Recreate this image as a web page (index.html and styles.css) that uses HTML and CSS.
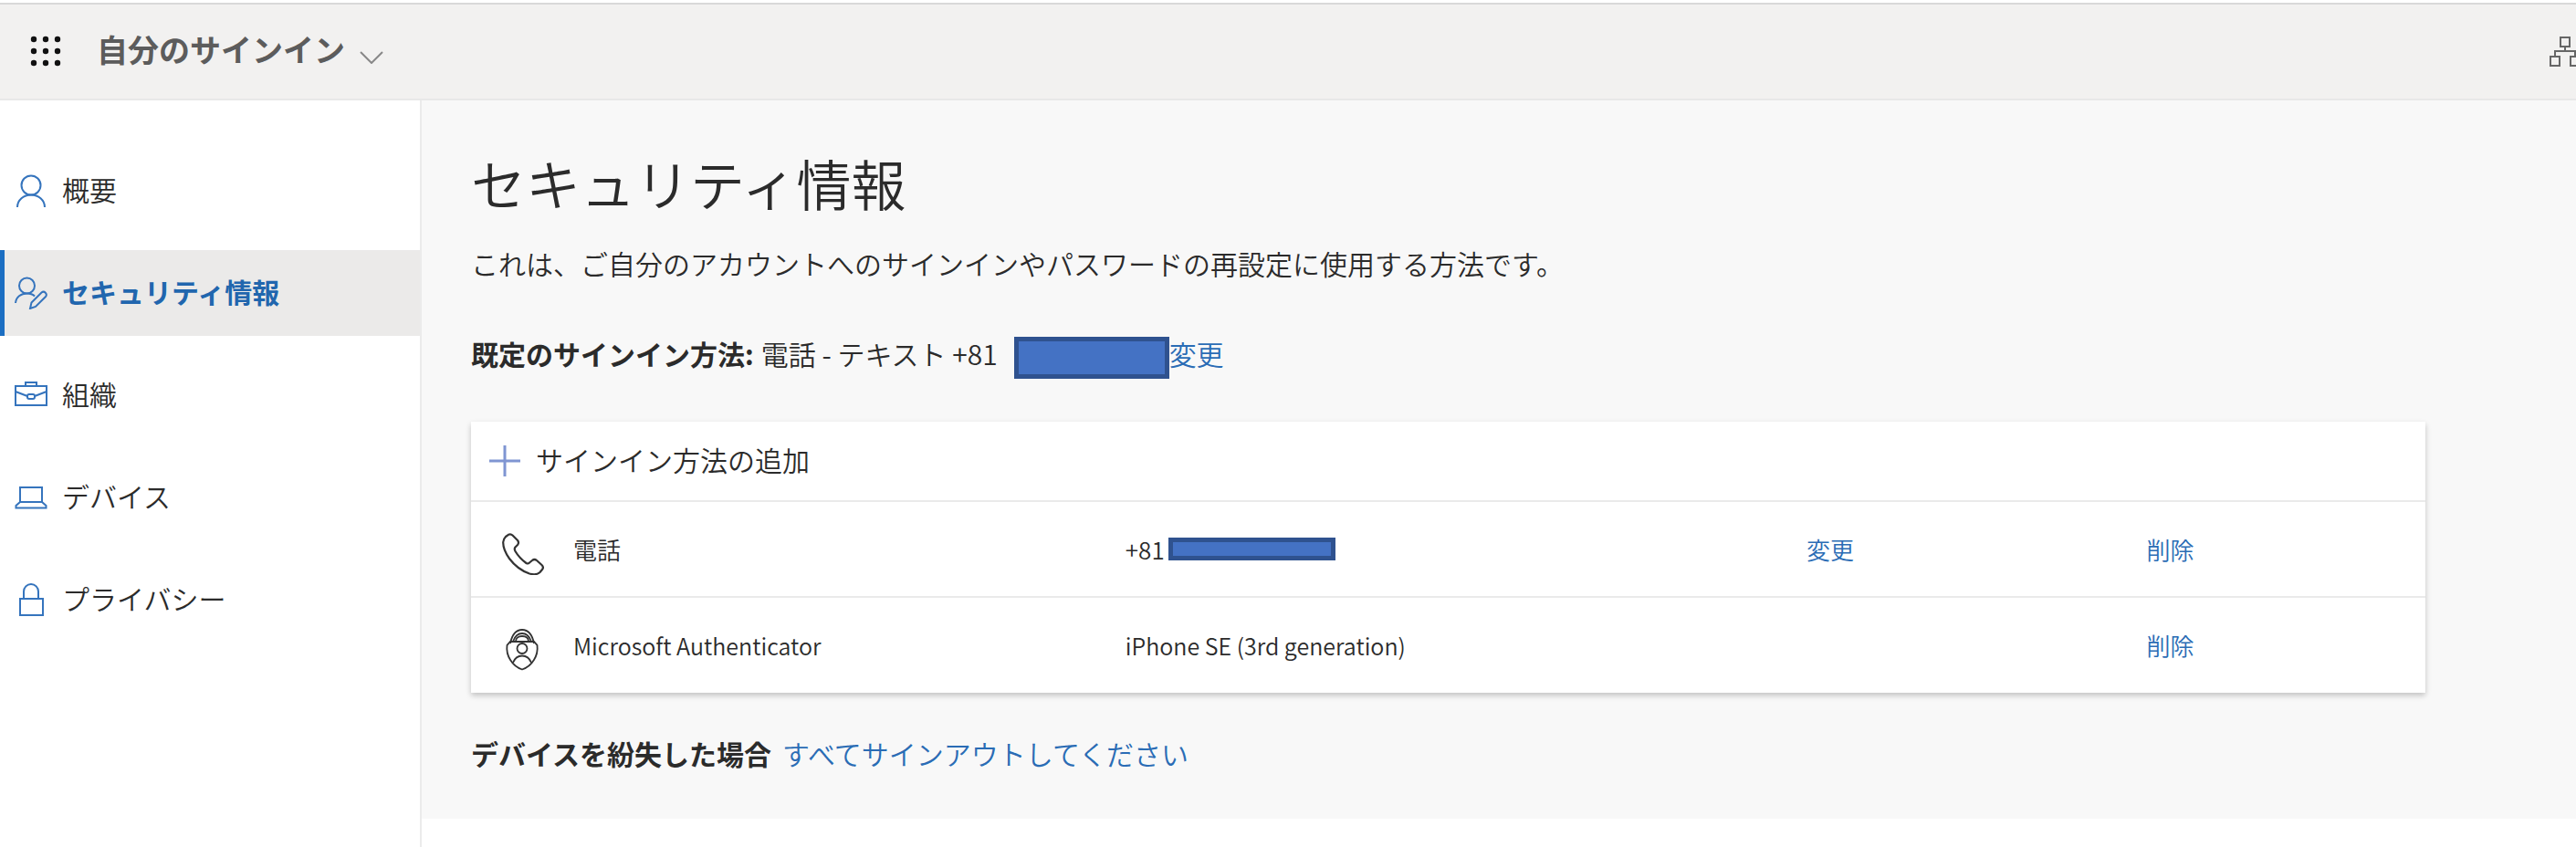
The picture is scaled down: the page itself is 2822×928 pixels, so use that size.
FILE: index.html
```html
<!DOCTYPE html>
<html lang="ja">
<head>
  <meta charset="UTF-8" />
  <title>自分のサインイン</title>
  <link rel="stylesheet" href="styles.css">
</head>
<body>
  <header class="header">
    <button class="icon-button" aria-label="アプリ">
      <svg width="34" height="34" viewBox="0 0 34 34" fill="#111">
        <circle cx="4" cy="4" r="3.2" /><circle cx="17" cy="4" r="3.2" /><circle cx="30" cy="4" r="3.2" />
        <circle cx="4" cy="17" r="3.2" /><circle cx="17" cy="17" r="3.2" /><circle cx="30" cy="17" r="3.2" />
        <circle cx="4" cy="30" r="3.2" /><circle cx="17" cy="30" r="3.2" /><circle cx="30" cy="30" r="3.2" />
      </svg>
    </button>
    <button class="title-button">
      自分のサインイン
      <svg class="chevron" width="26" height="14" viewBox="0 0 26 14" fill="none" stroke="#888" stroke-width="2">
        <path d="M1 1 L13 13 L25 1" />
      </svg>
    </button>
    <button class="icon-button org-button" aria-label="組織の切り替え">
      <svg width="34" height="34" viewBox="0 0 34 34" fill="none" stroke="#666" stroke-width="2">
        <rect x="12" y="2" width="10" height="10" />
        <rect x="1" y="23" width="10" height="10" />
        <rect x="23" y="23" width="10" height="10" />
        <path d="M17 12 V17 M6 23 V17 H28 V23" />
      </svg>
    </button>
  </header>

  <div class="layout">
    <nav class="sidebar">
      <a class="nav-item" href="#">
        <svg class="nav-icon" viewBox="0 0 36 36">
          <circle cx="18" cy="12" r="10.5" />
          <path d="M3 36 C3 28 10 22.500 18 22.500 S33 28 33 36" />
        </svg>
        <span>概要</span>
      </a>
      <a class="nav-item active" href="#">
        <svg class="nav-icon" viewBox="0 0 36 36">
          <circle cx="13.500" cy="10" r="8.500" />
          <path d="M1 29 C1.500 22.500 7 18.500 13.500 18.500 C17 18.500 20 19.500 22 21.500" />
          <path d="M17 35 L18.500 28.500 L29.500 17.500 A3.200 3.200 0 0 1 34 22 L23 33 Z" />
        </svg>
        <span>セキュリティ情報</span>
      </a>
      <a class="nav-item" href="#">
        <svg class="nav-icon" viewBox="0 0 36 36">
          <rect x="1" y="8" width="34" height="21" />
          <path d="M12 8 V4 H24 V8" />
          <path d="M1 14 L14 19 M22 19 L35 14" />
          <rect x="14" y="17" width="8" height="5" rx="2" />
        </svg>
        <span>組織</span>
      </a>
      <a class="nav-item" href="#">
        <svg class="nav-icon" viewBox="0 0 36 36">
          <path d="M6 23 V7 H30 V23 Z" />
          <path d="M6 23 L1.500 27 V29.500 H34.500 V27 L30 23" />
        </svg>
        <span>デバイス</span>
      </a>
      <a class="nav-item" href="#">
        <svg class="nav-icon" viewBox="0 0 36 36">
          <rect x="6" y="17" width="25" height="18" />
          <path d="M10 17 V9 A8 8 0 0 1 26 9 V17" />
        </svg>
        <span>プライバシー</span>
      </a>
    </nav>

    <main class="content">
      <h1>セキュリティ情報</h1>
      <p class="description">これは、ご自分のアカウントへのサインインやパスワードの再設定に使用する方法です。</p>
      <div class="default-method">
        <strong>既定のサインイン方法:</strong>
        <span>電話 - テキスト +81</span>
        <span class="mask mask-large"></span>
        <a href="#">変更</a>
      </div>

      <section class="card">
        <button class="add-button">
          <svg width="34" height="34" viewBox="0 0 34 34" fill="none" stroke="#7f95d2" stroke-width="3">
            <path d="M17 0 V34 M0 17 H34" />
          </svg>
          <span>サインイン方法の追加</span>
        </button>
        <table class="methods">
          <tr>
            <td class="col-icon">
              <svg width="46" height="46" viewBox="0 0 46 46" fill="none" stroke="#333" stroke-width="2.200" stroke-linejoin="round">
                <path d="M4 4 L7 1.800 Q9.500 0.500 11.500 2.500 L17 8 Q19 10.500 17 13 L14.500 15.500 Q13 17.500 14.500 20 Q19 27.500 26.500 33 Q28.500 34 30 32.500 L33 30 Q35.500 28 38 30 L43.500 35 Q46 37.500 44 40 L41.500 43 Q38 46.500 30 44.500 Q17 40 8 28 Q1 18 1.200 10 Q1.500 6.500 4 4 Z" />
              </svg>
            </td>
            <td class="col-name">電話</td>
            <td class="col-value"><div class="phone">+81<span class="mask mask-small"></span></div></td>
            <td class="col-change"><a href="#">変更</a></td>
            <td><a href="#">削除</a></td>
          </tr>
          <tr>
            <td class="col-icon">
              <svg width="46" height="46" viewBox="0 0 46 46" fill="none" stroke="#333" stroke-width="1.800">
                <path d="M9 16 C11 6 15 1 22 1 S33 6 35 16" />
                <path d="M12 14 C14 8 17 5 22 5 S30 8 32 14" />
                <path d="M15 14 C15 10 18 8 22 8 S29 10 29 14" />
                <path d="M9 14 H35 L38.500 18 C40 29 33 41 22 44.500 C11 41 4 29 5.500 18 Z" />
                <circle cx="22" cy="21.500" r="5.500" />
                <path d="M12 37 C14 32 17 29.500 22 29.500 S30 32 32 37" />
              </svg>
            </td>
            <td class="col-name latin">Microsoft Authenticator</td>
            <td class="col-value latin">iPhone SE (3rd generation)</td>
            <td class="col-change"></td>
            <td><a href="#">削除</a></td>
          </tr>
        </table>
      </section>

      <div class="lost-device">
        <strong>デバイスを紛失した場合</strong>
        <a href="#">すべてサインアウトしてください</a>
      </div>
    </main>
  </div>
</body>
</html>
```
FILE: styles.css
```css
* {
  box-sizing: border-box;
}
body {
  display: flex;
  flex-direction: column;
  min-height: 100vh;
  margin: 0;
  padding-top: 3px;
  font-family: "Noto Sans CJK JP", sans-serif;
  font-size: 30px;
  font-weight: 350;
  line-height: 44px;
  color: #2b2b2b;
  background: #fff;
}
a {
  color: #2a6cb5;
  text-decoration: none;
}
strong {
  font-weight: bold;
}
button {
  padding: 0;
  border: none;
  background: none;
  font: inherit;
  color: inherit;
  cursor: pointer;
}
svg {
  display: block;
  flex-shrink: 0;
}

.header {
  display: flex;
  align-items: center;
  height: 107px;
  padding: 0 0 2px 33px;
  border-top: 2px solid #d9d9d9;
  border-bottom: 2px solid #e8e8e8;
  background: #f2f1f0;
  overflow: hidden;
}
.title-button {
  display: flex;
  align-items: center;
  gap: 16px;
  margin-left: 39px;
  padding-bottom: 4px;
  font-size: 34px;
  font-weight: bold;
  color: #5c5c5c;
}
.chevron {
  margin-top: 18px;
}
/* the last icon runs off the right edge */
.org-button {
  margin-left: auto;
  margin-right: -5px;
}

.layout {
  display: flex;
  flex: 1;
  align-items: stretch;
}
.sidebar {
  display: flex;
  flex-direction: column;
  gap: 18px;
  flex: 0 0 462px;
  padding-top: 52px;
  border-right: 2px solid #ebebeb;
}
.nav-item {
  display: flex;
  align-items: center;
  gap: 16px;
  height: 94px;
  padding-left: 11px;
  border-left: 5px solid transparent;
  color: #2b2b2b;
}
.nav-item span,
.add-button span {
  padding-bottom: 4px;
}
.nav-item.active {
  border-left-color: #1b6ec2;
  background: #ebeae9;
  color: #2166ae;
  font-weight: bold;
}
.nav-icon {
  width: 36px;
  height: 36px;
  fill: none;
  stroke: #3574bd;
  stroke-width: 2;
}

.content {
  flex: 1;
  align-self: flex-start;
  padding: 46px 165px 50px 54px;
  background: #f8f8f8;
}
h1 {
  margin: 0;
  font-size: 60px;
  font-weight: 350;
  line-height: 88px;
}
.description {
  margin: 22px 0 0;
}
.default-method {
  display: flex;
  align-items: flex-start;
  margin-top: 55px;
}
.default-method strong {
  margin-right: 8px;
}
.mask {
  border: 5px solid #2f528f;
  background: #4472c4;
}
.mask-large {
  width: 170px;
  height: 46px;
  margin: 4px 0 0 18px;
}
.mask-small {
  width: 183px;
  height: 25px;
  margin-left: 4px;
}

.card {
  margin-top: 47px;
  background: #fff;
  box-shadow: 0 3px 6px rgba(0, 0, 0, 0.22);
}
.add-button {
  display: flex;
  align-items: center;
  gap: 17px;
  width: 100%;
  height: 86px;
  padding-left: 20px;
}
.methods {
  width: 100%;
  table-layout: fixed;
  border-collapse: collapse;
  font-size: 26px;
}
.methods td {
  height: 105px;
  padding: 0;
  border-top: 2px solid #eaeaea;
}
.methods .latin {
  font-size: 25px;
}
.col-icon {
  width: 112px;
}
.col-icon svg {
  margin: 10px 0 0 34px;
}
.col-name {
  width: 28.25%;
}
.col-value {
  width: 34.85%;
}
.col-change {
  width: 17.4%;
}
.phone {
  display: flex;
  align-items: center;
}
.lost-device {
  display: flex;
  gap: 12px;
  margin-top: 44px;
}
```
